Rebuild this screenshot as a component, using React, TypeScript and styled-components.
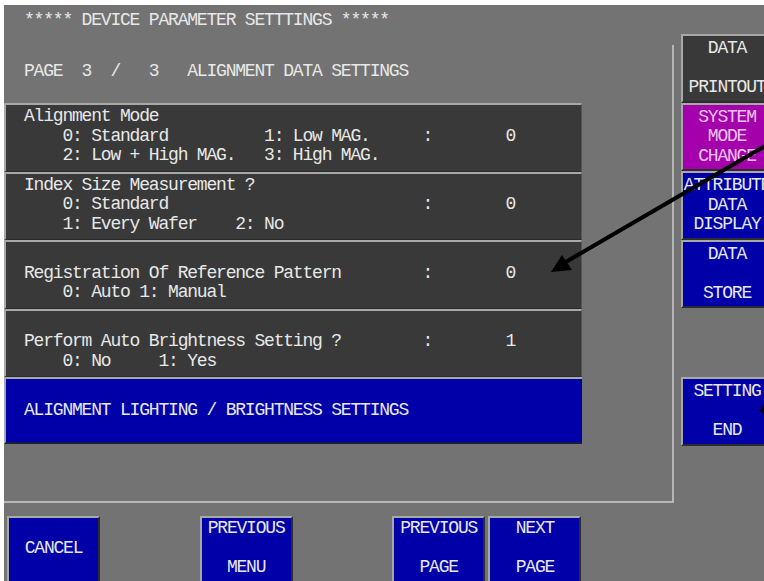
import React from 'react';
import styled, { createGlobalStyle } from 'styled-components';

const GlobalStyle = createGlobalStyle`
  html, body {
    margin: 0;
    padding: 0;
    background: #ffffff;
    overflow: hidden;
  }
  body {
    font-family: "Liberation Mono", "DejaVu Sans Mono", monospace;
  }
`;

const TEXT = '#e8e8e8';
const LIGHT_EDGE = '#a8a8a8';
const DARK_EDGE = '#2c2c2c';

const Screen = styled.div`
  position: relative;
  margin: 5px 0 0 4px;
  width: 800px;
  height: 600px;
  background: #737373;
  color: ${TEXT};
  font-size: 18px;
  letter-spacing: -1.2px;
  line-height: 19.5px;
`;

const Upper = styled.div`
  display: flex;
  align-items: flex-start;
`;

const LeftCol = styled.div`
  width: 670px;
`;

const Title = styled.div`
  box-sizing: border-box;
  height: 40px;
  padding: 6px 0 0 20px;
  white-space: pre;
`;

const Panel = styled.div`
  box-sizing: border-box;
  height: 458px;
  border-right: 2px solid #b6b6b6;
  border-bottom: 2px solid #b6b6b6;
`;

const PageLine = styled.div`
  box-sizing: border-box;
  height: 58px;
  padding: 17px 0 0 20px;
  white-space: pre;
`;

const Row = styled.div`
  box-sizing: border-box;
  height: 68.5px;
  width: 578px;
  background: #393939;
  border-top: 2px solid ${LIGHT_EDGE};
  border-left: 2px solid ${LIGHT_EDGE};
  border-right: 1px solid #555555;
  border-bottom: 1px solid ${DARK_EDGE};
  padding: 2px 0 0 18px;
  display: grid;
  grid-template-columns: 398px 12px 71px 12px;
`;

const RowText = styled.div`
  white-space: pre;
`;

const Cell = styled.div`
  grid-column: ${(p: { col: number }) => p.col};
  padding-top: 19.5px;
  text-align: center;
  letter-spacing: 0;
`;

const LinkBar = styled.div`
  box-sizing: border-box;
  height: 67px;
  width: 578px;
  background: #0000a8;
  border-top: 2px solid ${LIGHT_EDGE};
  border-left: 2px solid ${LIGHT_EDGE};
  border-bottom: 2px solid #1c1c3c;
  padding-left: 18px;
  display: flex;
  align-items: center;
  white-space: pre;
`;

const SideCol = styled.div`
  margin-left: 7px;
  padding-top: 29px;
  display: flex;
  flex-direction: column;
`;

const SideGap = styled.div`
  height: 69px;
`;

type Tone = 'dark' | 'magenta' | 'blue';

const toneBg: Record<Tone, string> = {
  dark: '#393939',
  magenta: '#a400ac',
  blue: '#0000a8',
};

const toneText: Record<Tone, string> = {
  dark: TEXT,
  magenta: '#f2c6f2',
  blue: TEXT,
};

const Key = styled.div<{ tone: Tone; col?: number }>`
  box-sizing: border-box;
  width: 92px;
  height: 68.5px;
  background: ${(p) => toneBg[p.tone]};
  color: ${(p) => toneText[p.tone]};
  border-top: 2px solid ${LIGHT_EDGE};
  border-left: 2px solid ${LIGHT_EDGE};
  border-right: 2px solid ${DARK_EDGE};
  border-bottom: 2px solid ${DARK_EDGE};
  display: flex;
  flex-direction: column;
  justify-content: center;
  align-items: center;
  overflow: visible;
  white-space: pre;
  ${(p) => (p.col ? `grid-column: ${p.col};` : '')}
`;

const BottomBar = styled.div`
  margin-top: 13px;
  padding-left: 3px;
  display: grid;
  grid-template-columns: repeat(6, 93px);
  column-gap: 3.3px;
`;

const BottomKey = styled(Key)`
  width: 93px;
  height: 68px;
  justify-content: flex-start;
  padding-top: 1px;
`;

const Overlay = styled.svg`
  position: fixed;
  left: 0;
  top: 0;
  width: 764px;
  height: 581px;
  pointer-events: none;
`;

const rows = [
  {
    lines: ['Alignment Mode', '    0: Standard          1: Low MAG.', '    2: Low + High MAG.   3: High MAG.'],
    value: '0',
  },
  {
    lines: ['Index Size Measurement ?', '    0: Standard', '    1: Every Wafer    2: No'],
    value: '0',
  },
  {
    lines: ['', 'Registration Of Reference Pattern', '    0: Auto 1: Manual'],
    value: '0',
  },
  {
    lines: ['', 'Perform Auto Brightness Setting ?', '    0: No     1: Yes'],
    value: '1',
  },
];

const sideKeys: { tone: Tone; lines: string[] }[] = [
  { tone: 'dark', lines: ['DATA', ' ', 'PRINTOUT'] },
  { tone: 'magenta', lines: ['SYSTEM', 'MODE', 'CHANGE'] },
  { tone: 'blue', lines: ['ATTRIBUTE', 'DATA', 'DISPLAY'] },
  { tone: 'blue', lines: ['DATA', ' ', 'STORE'] },
];

const bottomKeys = [
  { col: 1, lines: [' ', 'CANCEL', ' '] },
  { col: 3, lines: ['PREVIOUS', ' ', 'MENU'] },
  { col: 5, lines: ['PREVIOUS', ' ', 'PAGE'] },
  { col: 6, lines: ['NEXT', ' ', 'PAGE'] },
];

const Lines = ({ lines }: { lines: string[] }) => (
  <>
    {lines.map((l, i) => (
      <span key={i}>{l}</span>
    ))}
  </>
);

export default function App() {
  return (
    <>
      <GlobalStyle />
      <Screen>
        <Upper>
          <LeftCol>
            <Title>***** DEVICE PARAMETER SETTTINGS *****</Title>
            <Panel>
              <PageLine>PAGE  3  /   3   ALIGNMENT DATA SETTINGS</PageLine>
              {rows.map((r, i) => (
                <Row key={i}>
                  <RowText>{r.lines.join('\n')}</RowText>
                  <Cell col={2}>:</Cell>
                  <Cell col={4}>{r.value}</Cell>
                </Row>
              ))}
              <LinkBar>ALIGNMENT LIGHTING / BRIGHTNESS SETTINGS</LinkBar>
            </Panel>
          </LeftCol>
          <SideCol>
            {sideKeys.map((k, i) => (
              <Key key={i} tone={k.tone}>
                <Lines lines={k.lines} />
              </Key>
            ))}
            <SideGap />
            <Key tone="blue">
              <Lines lines={['SETTING', ' ', 'END']} />
            </Key>
          </SideCol>
        </Upper>
        <BottomBar>
          {bottomKeys.map((k) => (
            <BottomKey key={k.col} tone="blue" col={k.col}>
              <Lines lines={k.lines} />
            </BottomKey>
          ))}
        </BottomBar>
      </Screen>
      <Overlay viewBox="0 0 764 581">
        {/* pointer drawn across the screen */}
        <line x1="772" y1="142" x2="564" y2="263" stroke="#000" strokeWidth="4" />
        <polygon points="551,272 572,270 562,255" fill="#000" />
        <polygon points="759,411 765,403 765,414" fill="#000" />
      </Overlay>
    </>
  );
}
